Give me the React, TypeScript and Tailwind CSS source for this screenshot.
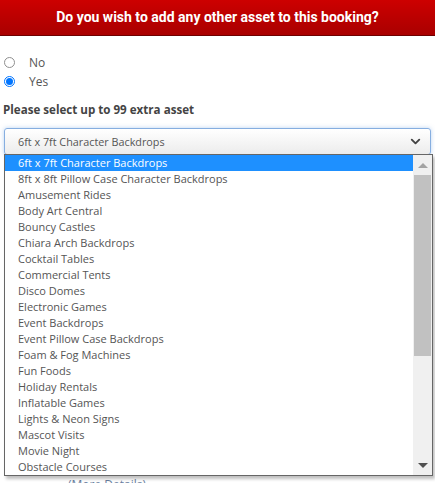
import { ChevronDown } from "lucide-react";

const assets = [
  "6ft x 7ft Character Backdrops",
  "8ft x 8ft Pillow Case Character Backdrops",
  "Amusement Rides",
  "Body Art Central",
  "Bouncy Castles",
  "Chiara Arch Backdrops",
  "Cocktail Tables",
  "Commercial Tents",
  "Disco Domes",
  "Electronic Games",
  "Event Backdrops",
  "Event Pillow Case Backdrops",
  "Foam & Fog Machines",
  "Fun Foods",
  "Holiday Rentals",
  "Inflatable Games",
  "Lights & Neon Signs",
  "Mascot Visits",
  "Movie Night",
  "Obstacle Courses",
];

function Radio({ checked }: { checked?: boolean }) {
  return checked ? (
    <span className="block w-[11px] h-[11px] rounded-full border border-[#0075ff] bg-white flex items-center justify-center">
      <span className="block w-[7px] h-[7px] rounded-full bg-[#0075ff]" />
    </span>
  ) : (
    <span className="block w-[11px] h-[11px] rounded-full border border-[#8f8f8f] bg-white" />
  );
}

export default function App() {
  return (
    <div className="w-[435px] h-[483px] overflow-hidden bg-white font-['Open_Sans',sans-serif] text-[#555]">
      <div className="h-[36px] bg-gradient-to-b from-[#cd0000] to-[#a90000] border-b border-[#6e0000] flex items-center justify-center">
        <h2 className="text-white text-[14px] font-bold font-['Roboto',sans-serif]">
          Do you wish to add any other asset to this booking?
        </h2>
      </div>

      <div className="px-[3px] pt-[17px]">
        <label className="flex items-center h-[19px] text-[12px]">
          <span className="w-[26px] pl-[1px]"><Radio /></span>
          <span>No</span>
        </label>
        <label className="flex items-center h-[19px] text-[12px]">
          <span className="w-[26px] pl-[1px]"><Radio checked /></span>
          <span>Yes</span>
        </label>
        <p className="mt-[10px] text-[11.6px] font-bold text-[#444]">Please select up to 99 extra asset</p>
      </div>

      <div className="relative px-[4px] mt-[10px]">
        <div className="h-[27px] rounded-[3px] border border-[#86aee0] bg-gradient-to-b from-white to-[#ececec] shadow-[0_0_4px_rgba(120,170,230,0.5)] flex items-center justify-between pl-[13px] pr-[7px] text-[10.8px] text-[#555]">
          <span>6ft x 7ft Character Backdrops</span>
          <ChevronDown size={15} strokeWidth={3} className="text-[#444]" />
        </div>

        {/* page content hidden behind the open list */}
        <div className="border-t border-[#ddd] mt-[28px] h-[108px] flex flex-col gap-[36px] pl-[8px]">
          <span className="w-[2px] h-[8px] bg-[#888] -mt-[18px]" />
          <span className="w-[2px] h-[8px] bg-[#888]" />
        </div>
        <div className="border-t border-[#ddd] h-[45px]" />
        <div className="border-t border-[#ddd] h-[140px]" />
        <p className="pl-[64px] text-[12px] text-[#6a7fa0]">(More Details)</p>

        <div className="absolute left-[4px] top-[26px] w-[429px] border border-[#666] bg-white flex shadow-[2px_3px_3px_rgba(0,0,0,0.25)]">
          <ul className="flex-1 text-[11px] leading-[16px]">
            {assets.map((a, i) => (
              <li
                key={a}
                className={i === 0 ? "pl-[13px] h-[16px] bg-[#1e90ff] text-white" : "pl-[13px] h-[16px] text-[#555]"}
              >
                {a}
              </li>
            ))}
          </ul>
          <div className="w-[19px] bg-[#f0f0f0] flex flex-col items-center">
            <div className="h-[20px] flex items-center justify-center">
              <span className="w-0 h-0 border-l-[5px] border-r-[5px] border-b-[5px] border-l-transparent border-r-transparent border-b-[#a3a3a3]" />
            </div>
            <div className="w-[17px] h-[181px] bg-[#c1c1c1]" />
            <div className="flex-1" />
            <div className="h-[20px] flex items-center justify-center">
              <span className="w-0 h-0 border-l-[5px] border-r-[5px] border-t-[5px] border-l-transparent border-r-transparent border-t-[#505050]" />
            </div>
          </div>
        </div>
      </div>
    </div>
  );
}
